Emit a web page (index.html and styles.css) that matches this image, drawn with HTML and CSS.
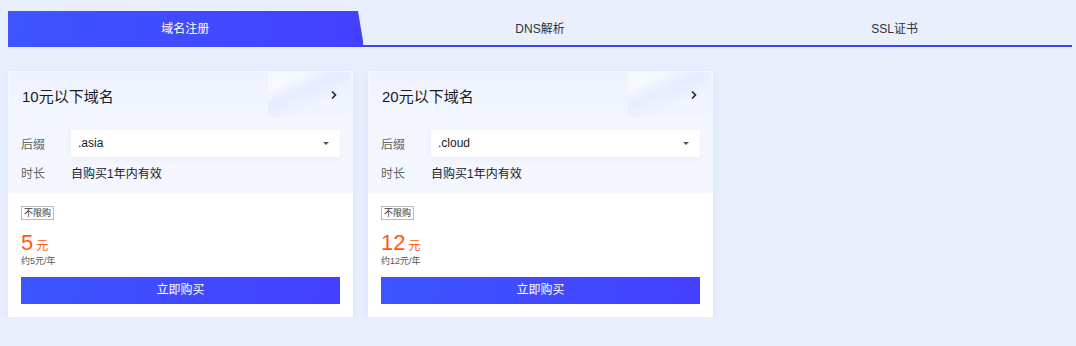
FILE: index.html
```html
<!DOCTYPE html>
<html lang="zh-CN">
<head>
  <meta charset="UTF-8">
  <title>域名注册</title>
  <link rel="stylesheet" href="styles.css">
</head>
<body>
  <div class="tabs">
    <div class="tab active">域名注册</div>
    <div class="tab">DNS解析</div>
    <div class="tab">SSL证书</div>
  </div>

  <div class="cards">
    <div class="card">
      <div class="card-head">
        <span class="card-title">10元以下域名</span>
        <span class="chev">
          <svg width="8" height="10" viewBox="0 0 8 10"><path d="M2 1.5 L5.5 5 L2 8.5" fill="none" stroke="#222" stroke-width="1.6"/></svg>
        </span>
      </div>
      <div class="card-opts">
        <div class="row">
          <span class="label">后缀</span>
          <div class="select">.asia<span class="caret"></span></div>
        </div>
        <div class="row">
          <span class="label">时长</span>
          <span class="value">自购买1年内有效</span>
        </div>
      </div>
      <div class="card-foot">
        <span class="tag">不限购</span>
        <div class="price"><span class="num">5</span><span class="unit">元</span></div>
        <div class="per">约5元/年</div>
        <a class="buy" href="#">立即购买</a>
      </div>
    </div>

    <div class="card">
      <div class="card-head">
        <span class="card-title">20元以下域名</span>
        <span class="chev">
          <svg width="8" height="10" viewBox="0 0 8 10"><path d="M2 1.5 L5.5 5 L2 8.5" fill="none" stroke="#222" stroke-width="1.6"/></svg>
        </span>
      </div>
      <div class="card-opts">
        <div class="row">
          <span class="label">后缀</span>
          <div class="select">.cloud<span class="caret"></span></div>
        </div>
        <div class="row">
          <span class="label">时长</span>
          <span class="value">自购买1年内有效</span>
        </div>
      </div>
      <div class="card-foot">
        <span class="tag">不限购</span>
        <div class="price"><span class="num">12</span><span class="unit">元</span></div>
        <div class="per">约12元/年</div>
        <a class="buy" href="#">立即购买</a>
      </div>
    </div>
  </div>
</body>
</html>
```

FILE: styles.css
```css
/* Reset */
* {
  box-sizing: border-box;
  margin: 0;
  padding: 0;
}

body {
  font-family: 'Liberation Sans', 'Noto Sans CJK SC', sans-serif;
  background: #e9effd;
  color: #222;
  padding: 11px 4px 0 8px;
  font-size: 12px;
}

/* Tabs */
.tabs {
  display: flex;
  height: 36px;
  border-bottom: 2px solid #4040ff;
}
.tab {
  flex: 1;
  display: flex;
  align-items: center;
  justify-content: center;
  font-size: 12px;
  color: #333;
  padding-bottom: 1px;
}
.tab.active {
  background: linear-gradient(100deg, #3d55ff, #4440ff);
  color: #fff;
  clip-path: polygon(0 0, 350px 0, 356px 100%, 0 100%);
  margin-bottom: -2px;
  padding-bottom: 3px;
}

/* Cards */
.cards {
  display: flex;
  gap: 15px;
  margin-top: 24px;
}
.card {
  width: 345px;
  background: #fff;
  box-shadow: 0 3px 10px rgba(60, 90, 200, 0.08);
}
.card-head {
  position: relative;
  height: 47px;
  display: flex;
  align-items: center;
  justify-content: space-between;
  padding: 0 14px 0 13px;
  background: linear-gradient(180deg, #eef3ff, #f2f6ff);
  overflow: hidden;
  border: 1px solid #f6f8ff;
  border-bottom: none;
}
/* faint decoration at top right */
.card-head::after {
  content: '';
  position: absolute;
  right: 2px;
  top: -6px;
  width: 82px;
  height: 52px;
  border-radius: 0 0 10px 6px;
  background: linear-gradient(155deg, rgba(255, 255, 255, 0.5) 25%, rgba(225, 232, 255, 0.6) 45%, rgba(240, 244, 255, 0.4) 70%);
}
.card-title {
  font-size: 15px;
  color: #1a1a1a;
}
.chev {
  position: relative;
  z-index: 1;
  display: flex;
}
.card-opts {
  background: #f4f7ff;
  padding: 12px 13px 8px 13px;
}
.row {
  display: flex;
  align-items: center;
}
.row + .row {
  margin-top: 2px;
  height: 26px;
}
.label {
  width: 50px;
  color: #666;
  font-size: 12px;
}
.value {
  font-size: 12px;
  color: #222;
}
.select {
  position: relative;
  flex: 1;
  height: 27px;
  line-height: 27px;
  padding-left: 7px;
  background: #fff;
  border-radius: 2px;
  box-shadow: 0 2px 6px rgba(100, 120, 200, 0.08);
  font-size: 12px;
  color: #222;
}
.caret {
  position: absolute;
  right: 11px;
  top: 12px;
  border-left: 3px solid transparent;
  border-right: 3px solid transparent;
  border-top: 3px solid #555;
}
.card-foot {
  padding: 12px 13px 13px 13px;
}
.tag {
  display: inline-block;
  border: 1px solid #bbb;
  font-size: 9px;
  line-height: 12px;
  padding: 0 2px;
  color: #333;
}
.price {
  margin-top: 12px;
  color: #ff5a0a;
  display: flex;
  align-items: baseline;
  height: 22px;
}
.price .num {
  font-size: 22px;
  line-height: 22px;
}
.price .unit {
  font-size: 12px;
  margin-left: 3px;
}
.per {
  font-size: 9px;
  color: #555;
  line-height: 12px;
  margin-top: 1px;
}
.buy {
  display: block;
  margin-top: 10px;
  height: 27px;
  line-height: 27px;
  text-align: center;
  color: #fff;
  text-decoration: none;
  font-size: 12px;
  background: linear-gradient(100deg, #3d55ff, #4440ff);
}
```
